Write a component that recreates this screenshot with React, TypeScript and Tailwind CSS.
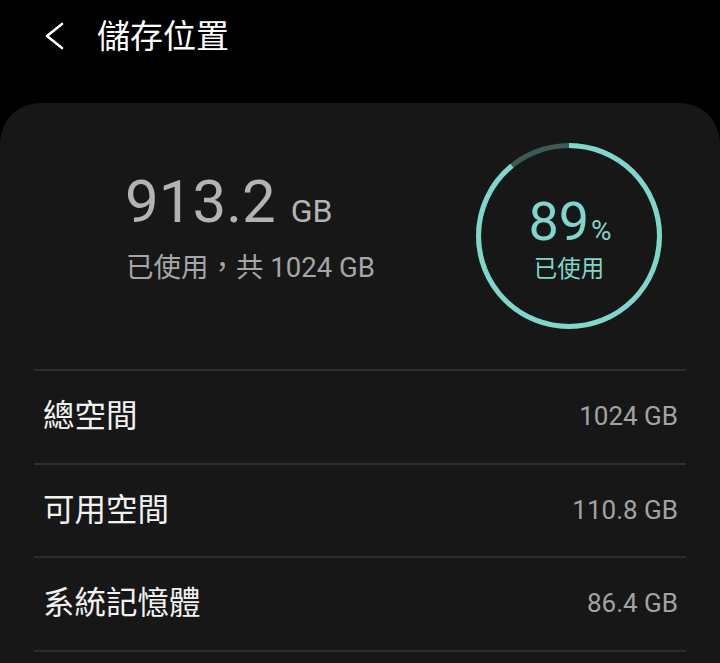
import React from 'react';

const FONT = 'Roboto, "Noto Sans CJK TC", "Noto Sans", sans-serif';

interface StorageRow {
  label: string;
  value: string;
}

const rows: StorageRow[] = [
  { label: '總空間', value: '1024 GB' },
  { label: '可用空間', value: '110.8 GB' },
  { label: '系統記憶體', value: '86.4 GB' },
];

function UsageRing({ percent }: { percent: number }) {
  const r = 90.5;
  const c = 2 * Math.PI * r;
  const used = (percent / 100) * c;
  return (
    <div className="relative w-[190px] h-[190px]">
      <svg width="190" height="190" viewBox="0 0 190 190" className="absolute inset-0">
        {/* remaining part, dim */}
        <circle cx="95" cy="95" r={r} fill="none" stroke="#3b5b56" strokeWidth="5" />
        {/* used part, clockwise from 12 o'clock */}
        <circle
          cx="95"
          cy="95"
          r={r}
          fill="none"
          stroke="#7fd6ca"
          strokeWidth="5"
          strokeDasharray={`${used} ${c}`}
          transform="rotate(-90 95 95)"
        />
      </svg>
      <div className="absolute inset-0 flex flex-col items-center text-[#7fd6ca]">
        <div className="mt-[51px] flex items-baseline leading-[60px] ml-[2px]">
          <span className="text-[54px]">{percent}</span>
          <span className="text-[28px] ml-[2px]">%</span>
        </div>
        <div className="text-[23.5px] leading-[30px] mt-[-7px]">已使用</div>
      </div>
    </div>
  );
}

export default function App() {
  return (
    <div className="w-[720px] h-[663px] bg-black overflow-hidden flex flex-col" style={{ fontFamily: FONT }}>
      {/* Header */}
      <div className="h-[72px] flex items-center shrink-0">
        <svg width="24" height="32" viewBox="0 0 24 32" className="ml-[42px]">
          <polyline points="20,4 5,16 20,28" fill="none" stroke="#ffffff" strokeWidth="2.6" strokeLinecap="round" strokeLinejoin="round" />
        </svg>
        <h1 className="ml-[31px] text-[33px] leading-none text-white font-normal">儲存位置</h1>
      </div>

      {/* Card */}
      <div className="mt-[31px] flex-1 bg-[#171717] rounded-t-[40px] px-[34px]">
        <div className="h-[266px] flex justify-between">
          <div className="ml-[91px] mt-[64px]">
            <div className="flex items-baseline leading-[70px] text-[#b3b3b3]">
              <span className="text-[60px]">913.2</span>
              <span className="text-[32px] ml-[15px]">GB</span>
            </div>
            <div className="mt-[5px] text-[27.5px] leading-[34px] text-[#a6a6a6] ml-[1px]">已使用，共 1024 GB</div>
          </div>
          <div className="mt-[38px] mr-[22px]">
            <UsageRing percent={89} />
          </div>
        </div>

        {rows.map((row) => (
          <div key={row.label}>
            <div className="h-[2px] bg-[#2e2e2e]" />
            <div className="h-[91.5px] flex items-center justify-between pl-[9px] pr-[8px]">
              <span className="text-[31.5px] text-[#f2f2f2]">{row.label}</span>
              <span className="text-[26px] text-[#a3a3a3]">{row.value}</span>
            </div>
          </div>
        ))}
        <div className="h-[2px] bg-[#2e2e2e]" />
      </div>
    </div>
  );
}
